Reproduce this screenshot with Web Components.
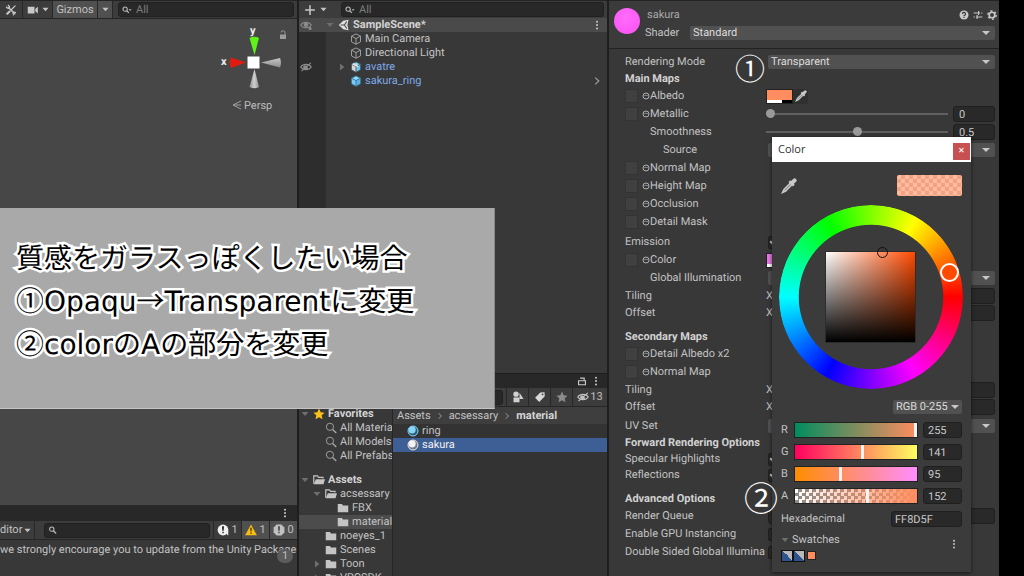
<!DOCTYPE html>
<html lang="ja">
<head>
<meta charset="utf-8">
<title>Unity Editor – sakura material</title>
<style>
  html, body { margin: 0; height: 100%; background: #000; overflow: hidden; }
  body { font: 11px/14px Roboto, "Noto Sans CJK JP", sans-serif; color: #c2c2c2; text-rendering: geometricPrecision; }
</style>
</head>
<body>
<editor-app></editor-app>

<script>
const BASE = `
  *, *::before, *::after { box-sizing: border-box; }
  button, input, select { font: inherit; color: inherit; text-rendering: inherit; margin: 0; border: 0; padding: 0; background: none; min-width: 0; border-radius: 0; outline: 0; }
  button { display: flex; align-items: center; justify-content: center; }
  .field { height: 16px; background: #292929; border: 1px solid #1f1f1f; border-radius: 3px; padding: 0 5px; color: #c8c8c8; }
  .drop { position: relative; display: flex; }
  .drop select { appearance: none; width: 100%; height: 14px; line-height: 14px; background: #515151; border-radius: 2px; padding: 0 16px 0 3px; color: #dcdcdc; }
  .drop::after { content: ""; position: absolute; right: 5px; top: 5px; border: 4px solid transparent; border-top-color: #c8c8c8; border-bottom: 0; pointer-events: none; }
`;
function define(name, css, html) {
  customElements.define(name, class extends HTMLElement {
    connectedCallback() {
      if (this.shadowRoot) return;
      const root = this.attachShadow({ mode: "open" });
      root.innerHTML = `<style>${BASE}${css}</style>${typeof html === "function" ? html(this) : html}`;
    }
  });
}

const CUBE = (top, left, right, line) => `<path d="M8 1.2 14 4.2 8 7.4 2 4.2z" fill="${top}"/><path d="M2 4.2 8 7.4V15L2 11.8z" fill="${left}"/><path d="M14 4.2 8 7.4V15l6-3.2z" fill="${right}"/><path d="M8 1.2 14 4.2V11.8L8 15 2 11.8V4.2zM2 4.2 8 7.4l6-3.2M8 7.4V15" fill="none" stroke="${line}" stroke-width="1.2" stroke-linejoin="round"/>`;
const ICONS = {
  tools: `<g stroke="#c8c8c8" fill="none" stroke-linecap="round"><path d="M5 5 13 13" stroke-width="2"/><path d="M13.5 2.5 8 8" stroke-width="1.6"/><path d="M6 10 3 13" stroke-width="2.8"/><path d="M2 4.2A2.6 2.6 0 0 0 5.6 5.4 2.6 2.6 0 0 0 4.4 1.8" stroke-width="1.8"/><path d="M14 11.4a2.4 2.4 0 0 0-3 .4 2.4 2.4 0 0 0 .4 2.6" stroke-width="1.6"/></g>`,
  camera: `<path d="M1 3.5h9v9H1zM11 6.6l3.5-3v9l-3.5-3z" fill="#c8c8c8"/>`,
  caret: `<path d="M1 4h14l-7 8z" fill="currentColor"/>`,
  right: `<path d="M4 1v14l9-7z" fill="currentColor"/>`,
  search: `<circle cx="6" cy="6.6" r="3.4" fill="none" stroke="#b4b4b4" stroke-width="1.8"/><path d="M8.6 9.2 13 13.6" stroke="#b4b4b4" stroke-width="2.2"/>`,
  searchmenu: `<circle cx="5" cy="6.6" r="3.4" fill="none" stroke="#b4b4b4" stroke-width="1.8"/><path d="M7.6 9.2 11 12.6" stroke="#b4b4b4" stroke-width="2"/><path d="M10.5 6.6h5L13 9.4z" fill="#b4b4b4"/>`,
  magnify: `<circle cx="6.6" cy="6.4" r="4.8" fill="none" stroke="#a8a8a8" stroke-width="1.2"/><path d="M10.2 10 15 14.6" stroke="#a8a8a8" stroke-width="1.8"/>`,
  plus: `<path d="M8 1.5v13M1.5 8h13" stroke="#c8c8c8" stroke-width="2"/>`,
  eye: `<path d="M1 8C4 3 12 3 15 8 12 13 4 13 1 8z" fill="none" stroke="#8c8c8c" stroke-width="1.4"/><circle cx="8" cy="7.5" r="3" fill="#8c8c8c"/><circle cx="13.4" cy="12.6" r="2" fill="#8c8c8c"/>`,
  eyeoff: `<path d="M1 8C4 3.4 12 3.4 15 8 12 12.6 4 12.6 1 8z" fill="none" stroke="currentColor" stroke-width="1.5"/><path d="M5.5 6.5a3 3 0 0 0 4.4 4l-1-3.5zM2 13.5 14.5 2.5" stroke="currentColor" stroke-width="1.6" fill="currentColor"/>`,
  unity: `<path d="M1 8 7 2.2 14 1l-1.4 7L14 15 7 13.8z" fill="#e0e0e0"/><path d="M8.5 8H3.6M8.5 8l3.2-4.6M8.5 8l3.2 4.6" fill="none" stroke="#484848" stroke-width="1.5"/>`,
  cube: CUBE("none", "none", "none", "#a8a8a8"),
  prefab: CUBE("#8fdcff", "#78ccf6", "#5eb4e4", "#3d7896"),
  variant: CUBE("#8fdcff", "#d8d8d8", "#6cc6f2", "#4a5c66") + `<path d="M5 2.8 10.6 6v2.2L8 7.4 2.6 4.4z" fill="#e4e4e4"/>`,
  dots: `<circle cx="8" cy="2.6" r="1.6" fill="#c8c8c8"/><circle cx="8" cy="8" r="1.6" fill="#c8c8c8"/><circle cx="8" cy="13.4" r="1.6" fill="#c8c8c8"/>`,
  chevron: `<path d="M5 2.5 11 8l-6 5.5" fill="none" stroke="#a0a0a0" stroke-width="1.8"/>`,
  lockline: `<path d="M2.5 7.5h11v6.4h-11zM11.5 7.5V3.4h-6.5" fill="none" stroke="#c8c8c8" stroke-width="1.8"/>`,
  star: `<path d="M8 .8 10.2 5.6 15.4 6.2 11.6 9.8 12.6 15 8 12.4 3.4 15 4.4 9.8.6 6.2 5.8 5.6z" fill="currentColor"/>`,
  folder: `<path d="M1 2.5h5.6L8 4.5h7v9.3H1z" fill="#c4c4c4"/>`,
  folderopen: `<path d="M1 13V2.5h5L7.4 4.4h6V6" fill="none" stroke="#c4c4c4" stroke-width="1.6"/><path d="M3.8 7H16l-2 6.8H1z" fill="#c4c4c4"/>`,
  shapes: `<circle cx="5.4" cy="4.2" r="3.6" fill="#d0d0d0"/><path d="M10 2.4l5.4 8.2h-5.4z" fill="#d0d0d0"/><path d="M2 8.6h8V15H2z" fill="#d0d0d0"/>`,
  tag: `<path d="M8.4 2 14 1.6 14.4 7 7 14.6 1.4 9z" fill="#d8d8d8"/><circle cx="11.4" cy="4.6" r="1.2" fill="#3c3c3c"/>`,
  ballblue: `<circle cx="8" cy="8" r="7.4" fill="#2b5b70"/><circle cx="8" cy="8" r="6.6" fill="none" stroke="#8fdcf8" stroke-width="1.2"/><circle cx="6.8" cy="6.4" r="4.8" fill="#86d4f6"/>`,
  ballwhite: `<circle cx="8" cy="8" r="7.4" fill="#707a8c"/><circle cx="8" cy="8" r="6.6" fill="none" stroke="#e6e6e6" stroke-width="1.2"/><circle cx="6.8" cy="6.4" r="4.8" fill="#f2f2f2"/>`,
  info: `<circle cx="8" cy="8" r="7.2" fill="#f0f0f0"/><path d="M11 12l4 3.4V9z" fill="#f0f0f0"/><path d="M6.6 3h2.8L9 9H7zM7 10.4h2v2H7z" fill="#303030"/>`,
  warn: `<path d="M8 .8 15.8 15H.2z" fill="#f7bd10"/><path d="M7 5h2l-.3 5H7.3zM7.1 11.3h1.8V13H7.1z" fill="#402f00"/>`,
  error: `<path d="M4.8.8h6.4l4 4v6.4l-4 4H4.8l-4-4V4.8z" fill="#c0c0c0"/><path d="M6.8 3h2.4L9 9H7zM7 10.4h2v2H7z" fill="#484848"/>`,
  help: `<circle cx="8" cy="8" r="7.2" fill="#c8c8c8"/><path d="M5.6 6.4A2.4 2.4 0 1 1 8.8 8.5L8 9.2V10M8 11.2v1.6" fill="none" stroke="#303030" stroke-width="1.8"/>`,
  preset: `<path d="M1 4.8h10M9 1.5v6.5M13 4.8h2M5 11.2h10M6.5 8v6.5M1 11.2h2" stroke="#c8c8c8" stroke-width="1.8"/>`,
  gear: `<circle cx="8" cy="8" r="4.4" fill="none" stroke="#c8c8c8" stroke-width="2.6"/><circle cx="8" cy="8" r="6.6" fill="none" stroke="#c8c8c8" stroke-width="2.4" stroke-dasharray="3.4 3.51"/>`,
  dropper: `<path d="M8.4 3.2 12.8 7.6" stroke="#c8c8c8" stroke-width="2.6"/><path d="M10.8 5.2 13.6 2.4" stroke="#c8c8c8" stroke-width="4" stroke-linecap="round"/><path d="M9.2 5.2 3 11.4 1.6 14.4 4.6 13 10.8 6.8z" fill="#777" stroke="#c8c8c8" stroke-width="1.6"/>`,
  target: `<circle cx="8" cy="8" r="6" fill="none" stroke="#bcbcbc" stroke-width="1.8"/><path d="M4 6.8h8" stroke="#8c8c8c" stroke-width="1.8"/>`
};
ICONS["star-y"] = ICONS.star.replace("currentColor", "#fbc117");
define("ui-icon", `:host { display: inline-flex; flex: none; width: 12px; height: 12px; } svg { width: 100%; height: 100%; display: block; }`,
  el => `<svg viewBox="0 0 16 16" aria-hidden="true">${ICONS[el.getAttribute("name")]}</svg>`);

define("search-box", `
  :host { display: block; flex: 1; min-width: 0; }
  label { display: flex; align-items: center; gap: 4px; height: 15px; padding: 0 3px; background: #282828; border: 1px solid #202020; border-radius: 3px; }
  input { flex: 1; height: 13px; } input::placeholder { color: #7c7c7c; opacity: 1; }
  ui-icon { width: 10px; height: 10px; }`,
  el => `<label><ui-icon name="${el.getAttribute("icon")}"></ui-icon><input type="text" aria-label="Search" placeholder="${el.getAttribute("hint") || ""}"></label>`);

/* Left column: scene view over the console */
define("scene-view", `
  :host { display: flex; flex-direction: column; flex: 1; min-height: 0; background: #474747; }
  .bar { display: flex; height: 19px; background: #3c3c3c; border-bottom: 1px solid #242424; border-top: 1px solid #242424; padding-right: 3px; align-items: center; }
  .bar button { height: 17px; border-right: 1px solid #282828; gap: 3px; flex: none; }
  .t { width: 23px; } .c { width: 30px; } .g { width: 45px; background: #505050; } .a { width: 15px; background: #505050; }
  .bar button ui-icon:last-child { width: 7px; height: 7px; } .bar .t ui-icon:last-child, .bar .c ui-icon:first-child { width: 12px; height: 12px; }
  search-box { margin-left: 5px; }
  .view { display: flex; justify-content: flex-end; align-items: flex-start; padding: 6px 7px; }
  svg { width: 72px; height: 90px; } text { font: 700 11px Roboto, sans-serif; fill: #eee; } .p { font-weight: 400; fill: #bcbcbc; }`,
  `<div class="bar">
    <button class="t" aria-label="Tools"><ui-icon name="tools"></ui-icon></button>
    <button class="c" aria-label="Camera"><ui-icon name="camera"></ui-icon><ui-icon name="caret"></ui-icon></button>
    <button class="g">Gizmos</button><button class="a" aria-label="Gizmo options"><ui-icon name="caret"></ui-icon></button>
    <search-box icon="searchmenu" hint="All"></search-box>
  </div>
  <div class="view"><svg viewBox="0 0 72 90">
    <defs><linearGradient id="s"><stop stop-color="#8c8c8c"/><stop offset=".5" stop-color="#d0d0d0"/><stop offset="1" stop-color="#929292"/></linearGradient>
    <linearGradient id="v" x2="0" y2="1"><stop stop-color="#c8c8c8"/><stop offset="1" stop-color="#8c8c8c"/></linearGradient></defs>
    <path d="M31.5 13q5-2.5 9.5 0L36.5 30z" fill="#5df31a"/><path d="M13 32.5q-2.5 5 0 10.5L28 37.5z" fill="#e01b10"/>
    <path d="M62 33q2 5 0 9.5L43 37.5z" fill="url(#v)"/><path d="M36.5 44 41 62q-4.5 2.5-9.5 0z" fill="url(#s)"/>
    <path d="M29.5 31.5h12v12h-12z" fill="#fff"/>
    <text x="32" y="9">y</text><text x="3" y="40">x</text>
    <path d="M62 9.5h6v4.5h-6z" fill="#9c9c9c"/><path d="M67 9.5V8a2 2 0 0 0-4-.5" fill="none" stroke="#9c9c9c"/>
    <path d="M23 76 15 80l8 4M15 80h8" fill="none" stroke="#a0a0a0"/><text class="p" x="26" y="84">Persp</text>
  </svg></div>`);

define("console-panel", `
  :host { display: block; height: 71px; background: #383838; position: relative; overflow: hidden; }
  .tab { height: 16px; background: #282828; display: flex; justify-content: flex-end; align-items: center; padding-right: 7px; }
  .tab ui-icon { width: 10px; height: 10px; }
  .bar { display: flex; align-items: center; height: 19px; background: #3c3c3c; border-bottom: 1px solid #262626; }
  .bar button { height: 18px; gap: 2px; border-left: 1px solid #282828; flex: none; width: 28px; }
  .bar .ed { border: 0; border-right: 1px solid #282828; width: 35px; justify-content: flex-start; }
  .ed ui-icon { width: 7px; height: 7px; }
  .on { background: #505050; }
  search-box { margin: 0 3px 0 9px; } p { margin: 3px 0 0; white-space: nowrap; }
  .n { position: absolute; right: 4px; top: 44px; width: 16px; height: 14px; border-radius: 7px; background: #5c5c5c; text-align: center; }`,
  `<div class="tab"><ui-icon name="dots"></ui-icon></div>
   <div class="bar"><button class="ed">ditor<ui-icon name="caret"></ui-icon></button><search-box icon="search"></search-box>
   <button><ui-icon name="info"></ui-icon>1</button><button class="on"><ui-icon name="warn"></ui-icon>1</button><button class="on"><ui-icon name="error"></ui-icon>0</button></div>
   <p>we strongly encourage you to update from the Unity Package</p><span class="n">1</span>`);

/* One line of a tree; --in is its indentation */
define("tree-row", `
  :host { display: flex; align-items: center; height: 14px; white-space: nowrap; padding-left: var(--in, 0px); overflow: hidden; }
  :host([bold]) { font-weight: 700; color: #d4d4d4; }
  .f { width: 8px; height: 8px; margin-right: 4px; color: #6e6e6e; } .i { margin-right: 3px; }
  span { flex: 1; }`,
  el => { const f = el.getAttribute("fold"); return `<ui-icon class="f" name="${f || "right"}" ${f ? "" : 'style="visibility:hidden"'}></ui-icon><ui-icon class="i" name="${el.getAttribute("icon")}"></ui-icon><span><slot></slot></span><slot name="end"></slot>`; });

define("hierarchy-panel", `
  :host { display: flex; flex-direction: column; flex: 1; min-height: 0; background: #383838; }
  .bar { display: flex; align-items: center; height: 18px; padding: 0 3px 0 5px; background: #3c3c3c; border-top: 1px solid #242424; }
  .bar button { gap: 4px; width: 37px; justify-content: flex-start; } .bar button ui-icon + ui-icon { width: 7px; height: 7px; }
  .tree { flex: 1; display: grid; grid-template-columns: 27px 1fr; align-content: start; background: linear-gradient(to right, #2d2d2d 27px, transparent 27px); }
  .g { height: 14px; padding-left: 1px; display: flex; align-items: center; color: #8c8c8c; } .s { background: #4a4a4a; }
  .blue { color: #7da8e6; } tree-row ui-icon { width: 10px; height: 10px; margin-right: 5px; }`,
  `<div class="bar"><button aria-label="Create"><ui-icon name="plus"></ui-icon><ui-icon name="caret"></ui-icon></button><search-box icon="searchmenu" hint="All"></search-box></div>
  <div class="tree">
    <div class="g s"><ui-icon name="eye"></ui-icon></div><tree-row class="s" bold fold="caret" icon="unity">SampleScene*<ui-icon slot="end" name="dots"></ui-icon></tree-row>
    <div class="g"></div><tree-row icon="cube" style="--in:12px">Main Camera</tree-row>
    <div class="g"></div><tree-row icon="cube" style="--in:12px">Directional Light</tree-row>
    <div class="g"><ui-icon name="eyeoff"></ui-icon></div><tree-row class="blue" fold="right" icon="variant" style="--in:12px">avatre</tree-row>
    <div class="g"></div><tree-row class="blue" icon="prefab" style="--in:12px">sakura_ring<ui-icon slot="end" name="chevron"></ui-icon></tree-row>
  </div>`);

define("project-panel", `
  :host { display: flex; flex-direction: column; height: 203px; background: #333; overflow: hidden; }
  .tab { flex: none; height: 15px; background: #282828; border-top: 1px solid #1e1e1e; display: flex; justify-content: flex-end; align-items: center; gap: 4px; padding-right: 6px; }
  .tab ui-icon { width: 10px; height: 10px; }
  .bar { flex: none; display: flex; height: 19px; background: #3c3c3c; align-items: center; border-bottom: 1px solid #262626; }
  .bar button { width: 22px; height: 18px; border-left: 1px solid #282828; color: #8c8c8c; gap: 1px; flex: none; }
  .bar .h { width: 35px; color: #c0c0c0; } .bar search-box { margin: 0 3px; }
  .cols { flex: 1; min-height: 0; display: grid; grid-template-columns: 94px minmax(0, 1fr); }
  .side { background: #383838; border-right: 1px solid #262626; overflow: hidden; }
  .side .gap { height: 10px; } .sel { background: #4c4c4c; }
  nav { height: 17px; background: #3e3e3e; display: flex; align-items: center; gap: 5px; padding-left: 4px; white-space: nowrap; }
  nav a { color: inherit; text-decoration: none; } nav ui-icon { width: 8px; height: 8px; } nav b { font-weight: 700; color: #d4d4d4; }
  .list tree-row.on { background: #3e5f96; color: #f0f0f0; }`,
  `<div class="tab"><ui-icon name="lockline"></ui-icon><ui-icon name="dots"></ui-icon></div>
  <div class="bar"><search-box icon="search"></search-box><button aria-label="Filter by type"><ui-icon name="shapes"></ui-icon></button><button aria-label="Filter by label"><ui-icon name="tag"></ui-icon></button><button aria-label="Favorite"><ui-icon name="star"></ui-icon></button><button class="h"><ui-icon name="eyeoff"></ui-icon>13</button></div>
  <div class="cols"><div class="side">
    <tree-row bold fold="caret" icon="star-y" style="--in:2px">Favorites</tree-row>
    <tree-row icon="magnify" style="--in:14px">All Materia</tree-row>
    <tree-row icon="magnify" style="--in:14px">All Models</tree-row>
    <tree-row icon="magnify" style="--in:14px">All Prefabs</tree-row>
    <div class="gap"></div>
    <tree-row bold fold="caret" icon="folderopen" style="--in:2px">Assets</tree-row>
    <tree-row fold="caret" icon="folderopen" style="--in:14px">acsessary</tree-row>
    <tree-row icon="folder" style="--in:26px">FBX</tree-row>
    <tree-row class="sel" icon="folder" style="--in:26px">material</tree-row>
    <tree-row icon="folder" style="--in:14px">noeyes_1</tree-row>
    <tree-row icon="folder" style="--in:14px">Scenes</tree-row>
    <tree-row fold="right" icon="folder" style="--in:14px">Toon</tree-row>
    <tree-row fold="right" icon="folder" style="--in:14px">VRCSDK</tree-row>
  </div><div>
    <nav><a href="#assets">Assets</a><ui-icon name="chevron"></ui-icon><a href="#acsessary">acsessary</a><ui-icon name="chevron"></ui-icon><b>material</b></nav>
    <div class="list"><tree-row icon="ballblue" style="--in:2px">ring</tree-row><tree-row class="on" icon="ballwhite" style="--in:2px">sakura</tree-row></div>
  </div></div>`);

/* A labelled material property; `type` picks the control */
const CONTROLS = {
  select: v => `<div class="drop"><select id="c"><option>${v}</option></select></div>`,
  slider: v => `<div class="line"><input id="c" type="range" min="0" max="1" step="0.01" value="${v}"><input class="field num" type="text" aria-label="Value" value="${v}"></div>`,
  field: v => `<input id="c" class="field" type="text" value="${v}">`,
  vector: v => `<div class="line v"><span>X</span><input id="c" class="field" value="${v}"></div>`,
  check: v => `<input id="c" type="checkbox" ${v ? "checked" : ""}>`,
  color: v => `<div class="col"><button id="c" class="sw" style="--c:${v}" aria-label="Color"></button><button class="dr" aria-label="Pick color"><ui-icon name="dropper"></ui-icon></button></div>`
};
define("prop-row", `
  :host { display: grid; grid-template-columns: 143px minmax(0, 1fr); align-items: center; height: 18px; }
  :host([type="vector"]) { height: 17px; }
  :host([head]), :host([short]) { height: 16px; } :host([head]) { font-weight: 700; color: #d2d2d2; }
  label, .lb { display: flex; align-items: center; white-space: nowrap; overflow: hidden; }
  :host([head]) .lb { overflow: visible; }
  :host([in="1"]) label { padding-left: 25px; } :host([in="2"]) label { padding-left: 38px; }
  .tex { width: 13px; height: 14px; background: #404040; border: 1px solid #333; margin-right: 4px; flex: none; }
  .tex + ui-icon { width: 8px; height: 8px; }
  .line { display: flex; gap: 5px; align-items: center; } .v { margin-left: -2px; } .v .field { flex: 1; }
  input[type=range] { appearance: none; flex: 1; height: 12px; margin-left: -2px; }
  input[type=range]::-webkit-slider-runnable-track { height: 2px; background: #606060; }
  input[type=range]::-webkit-slider-thumb { appearance: none; width: 9px; height: 9px; margin-top: -4px; border-radius: 50%; background: #9a9a9a; }
  .num { width: 42px; }
  input[type=checkbox] { appearance: none; width: 13px; height: 13px; background: #292929; border: 1px solid #1f1f1f; border-radius: 2px; display: grid; place-items: center; }
  input[type=checkbox]:checked::after { content: ""; width: 9px; height: 5px; border: solid #d0d0d0; border-width: 0 0 2px 2px; transform: rotate(-45deg); margin-bottom: 3px; }
  .col { display: flex; margin-left: -2px; } .sw { width: 27px; height: 15px; border: 1px solid #222; background: linear-gradient(to right, #fff 60%, #000 60%) bottom / 100% 3px no-repeat, var(--c); }
  .dr { width: 15px; height: 15px; background: #303030; border-radius: 0 3px 3px 0; }`,
  el => {
    const t = el.getAttribute("type"), n = el.getAttribute("label");
    const tex = el.hasAttribute("tex") ? `<button class="tex" aria-label="${n} texture"></button><ui-icon name="target"></ui-icon>` : "";
    return t ? `<label for="c">${tex}${n}</label>${CONTROLS[t](el.getAttribute("value") || "")}` : `<div class="lb">${tex}${n}</div>`;
  });

define("inspector-panel", `
  :host { display: block; background: #383838; position: relative; border-left: 1px solid #1e1e1e; }
  header { display: grid; grid-template-columns: 27px 41px minmax(0, 1fr); column-gap: 4px; height: 49px; padding: 7px 4px 0 5px; border-top: 1px solid #242424; border-bottom: 1px solid #222; background: #3b3b3b; grid-template-rows: 14px 14px; row-gap: 4px; align-items: center; }
  .ball { grid-row: 1 / 3; width: 26px; height: 26px; align-self: start; border-radius: 50%; background: radial-gradient(circle at 45% 35%, #ff6cfb, #fb50f4); }
  .name { grid-column: 2; color: #a8a8a8; padding-left: 2px; } .acts { display: flex; justify-content: flex-end; gap: 4px; margin-right: -2px; } .acts ui-icon { width: 10px; height: 10px; }
  header label { grid-column: 2; }
  .props { padding: 4px 4px 0 16px; } section { padding-top: 2px; } section.g { padding-top: 8px; }`,
  `<header><div class="ball"></div><span class="name">sakura</span><div class="acts"><ui-icon name="help"></ui-icon><ui-icon name="preset"></ui-icon><ui-icon name="gear"></ui-icon></div>
    <label for="sh">Shader</label><div class="drop"><select id="sh"><option>Standard</option></select></div></header>
  <div class="props">
    <prop-row label="Rendering Mode" type="select" value="Transparent"></prop-row>
    <prop-row head label="Main Maps"></prop-row>
    <prop-row tex label="Albedo" type="color" value="#ff8d5f"></prop-row>
    <prop-row tex label="Metallic" type="slider" value="0"></prop-row>
    <prop-row in="1" label="Smoothness" type="slider" value="0.5"></prop-row>
    <prop-row in="2" label="Source" type="select"></prop-row>
    <prop-row tex label="Normal Map"></prop-row><prop-row tex label="Height Map"></prop-row><prop-row tex label="Occlusion"></prop-row><prop-row tex label="Detail Mask"></prop-row>
    <section><prop-row label="Emission" type="check" value="1"></prop-row><prop-row tex label="Color" type="color" value="#e878e4"></prop-row><prop-row in="1" label="Global Illumination" type="select"></prop-row>
    <prop-row label="Tiling" type="vector"></prop-row><prop-row label="Offset" type="vector"></prop-row></section>
    <section class="g"><prop-row head label="Secondary Maps"></prop-row><prop-row tex label="Detail Albedo x2"></prop-row><prop-row tex label="Normal Map"></prop-row>
    <prop-row label="Tiling" type="vector"></prop-row><prop-row label="Offset" type="vector"></prop-row></section>
    <section><prop-row label="UV Set" type="select"></prop-row><prop-row head label="Forward Rendering Options"></prop-row>
    <prop-row short label="Specular Highlights" type="check" value="1"></prop-row><prop-row short label="Reflections" type="check" value="1"></prop-row></section>
    <section class="g"><prop-row head label="Advanced Options"></prop-row><prop-row label="Render Queue" type="field"></prop-row>
    <prop-row label="Enable GPU Instancing" type="check"></prop-row><prop-row label="Double Sided Global Illumina" type="check"></prop-row></section>
  </div><slot></slot>`);

define("channel-row", `
  :host { display: grid; grid-template-columns: 8px minmax(0, 1fr) 39px; column-gap: 5px; align-items: center; height: 16px; }
  input[type=range] { appearance: none; height: 16px; width: 100%; border: 1px solid #222; background: var(--track); }
  input[type=range]::-webkit-slider-thumb { appearance: none; width: 3px; height: 14px; background: #f4f4f4; }
  .field { padding: 0 4px; }`,
  el => `<label for="r">${el.getAttribute("name")}</label><input id="r" type="range" min="0" max="255" value="${el.getAttribute("value")}"><input class="field" type="text" aria-label="${el.getAttribute("name")} value" value="${el.getAttribute("value")}">`);

define("color-picker", `
  :host { display: block; background: #3b3b3b; box-shadow: 0 1px 4px #0009; }
  .title { display: flex; justify-content: space-between; align-items: center; height: 25px; background: #fff; color: #333; padding-left: 6px; font: 11px/14px "Open Sans", sans-serif; }
  .title button { width: 17px; height: 17px; background: #c75050; color: #fff; font-weight: 600; line-height: 12px; margin: 3px 1px 0 0; }
  .body { padding: 13px 9px 10px; }
  .top { display: flex; justify-content: space-between; height: 21px; align-items: center; } .top ui-icon { width: 16px; height: 16px; }
  .prev { width: 65px; height: 21px; border-radius: 2px; background: repeating-conic-gradient(#efa286 0 25%, #ffbb9e 0 50%) 0 0 / 8px 8px; }
  .wheel { position: relative; width: 184px; height: 184px; margin: 9px 0 0 -2px; }
  .hue { position: absolute; inset: 0; border-radius: 50%; background: conic-gradient(from 90deg, red, #f0f, blue, cyan, lime, yellow, red); -webkit-mask: radial-gradient(closest-side, transparent 78%, #000 79%); mask: radial-gradient(closest-side, transparent 78%, #000 79%); }
  .sv { position: absolute; left: 46px; top: 46px; width: 91px; height: 92px; border: 1px solid #2c2c2c; background: linear-gradient(to top, #000, transparent), linear-gradient(to right, #fff, #ff4a00); }
  .k { position: absolute; border-radius: 50%; } .kh { width: 19px; height: 19px; left: 161px; top: 58px; border: 2px solid #fff; background: #ff4a00; } .ks { width: 11px; height: 11px; left: 98px; top: 42px; border: 1px solid #111; }
  .mode { width: 69px; margin: 11px 0 8px auto; } .mode::after { right: 3px; } .mode select { padding-right: 0; white-space: nowrap; }
  .ch { display: grid; gap: 6px; }
  .hex { display: flex; justify-content: space-between; align-items: center; margin-top: 7px; } .hex input { width: 71px; padding: 0 3px; }
  .sws { display: flex; align-items: center; gap: 3px; height: 14px; margin-top: 6px; color: #6e6e6e; } .sws span { flex: 1; color: #c2c2c2; } .sws ui-icon { width: 8px; height: 8px; } .sws .d { width: 10px; height: 10px; margin: 8px 3px 0 0; }
  .chips { display: flex; margin-top: 3px; } .chips button { width: 12px; height: 12px; border: 1px solid #111; background: linear-gradient(45deg, #2f538c 55%, #b8b8b8 55%); } .chips .o { width: 9px; height: 9px; margin: 1px 2px; background: #ff8d5f; border-color: #222; }`,
  `<div class="title"><span>Color</span><button aria-label="Close">×</button></div>
  <div class="body">
    <div class="top"><ui-icon name="dropper"></ui-icon><div class="prev"></div></div>
    <div class="wheel"><div class="hue"></div><div class="sv"></div><div class="k kh"></div><div class="k ks"></div></div>
    <div class="drop mode"><select aria-label="Color mode"><option>RGB 0-255</option></select></div>
    <div class="ch">
      <channel-row name="R" value="255" style="--track:linear-gradient(to right,#008d5f,#ff8d5f)"></channel-row>
      <channel-row name="G" value="141" style="--track:linear-gradient(to right,#ff005f,#ffff5f)"></channel-row>
      <channel-row name="B" value="95" style="--track:linear-gradient(to right,#ff8d00,#ff8dff)"></channel-row>
      <channel-row name="A" value="152" style="--track:linear-gradient(to right,#ff8d5f00,#ff8d5f),repeating-conic-gradient(#8c8c8c 0 25%,#fff 0 50%) 0 0/7px 7px"></channel-row>
    </div>
    <div class="hex"><label for="hx">Hexadecimal</label><input id="hx" class="field" type="text" value="FF8D5F"></div>
    <div class="sws"><ui-icon name="caret"></ui-icon><span>Swatches</span><ui-icon class="d" name="dots"></ui-icon></div>
    <div class="chips"><button aria-label="Swatch 1"></button><button aria-label="Swatch 2"></button><button class="o" aria-label="Swatch 3"></button></div>
  </div>`);

define("step-mark", `:host { display: block; color: #fff; font-family: "Noto Sans CJK JP", sans-serif; font-size: 30px; line-height: 32px; }`, `<slot></slot>`);

define("caption-note", `
  :host { display: block; background: #a9a9a9; color: #000; padding: 28px 16px 0; font: 400 28px/43px "Noto Sans CJK JP", sans-serif; border-bottom: 1px solid #c4c4c4; border-right: 1px solid #888; }
  p { margin: 0; height: 43px; white-space: nowrap; -webkit-text-stroke: 5px #fff; paint-order: stroke fill; }
  span { font-family: "DejaVu Sans", sans-serif; font-weight: 400; }`,
  `<p>質感をガラスっぽくしたい場合</p><p>①<span>Opaqu</span>→<span>Transparent</span>に変更</p><p>②<span>color</span>の<span>A</span>の部分を変更</p>`);

define("editor-app", `
  :host { position: relative; display: grid; grid-template-columns: minmax(0, 297fr) minmax(0, 311fr) minmax(0, 391fr) minmax(0, 25fr); height: 100vh; background: #000; overflow: hidden; }
  .col { display: flex; flex-direction: column; min-width: 0; min-height: 0; } .mid { border-left: 2px solid #1e1e1e; border-right: 1px solid #1e1e1e; } .left { background: #282828; }
  color-picker { position: absolute; right: 28px; top: 137px; width: 199px; }
  .one { position: absolute; left: 126px; top: 51px; } .two { position: absolute; left: 135px; top: 481px; font-size: 34px; }
  caption-note { position: absolute; left: 0; top: 208px; width: 495px; height: 201px; box-sizing: border-box; }`,
  `<div class="col left"><scene-view></scene-view><console-panel></console-panel></div>
  <div class="col mid"><hierarchy-panel></hierarchy-panel><project-panel></project-panel></div>
  <inspector-panel><color-picker></color-picker><step-mark class="one">①</step-mark><step-mark class="two">②</step-mark></inspector-panel>
  <caption-note></caption-note>`);
</script>
</body>
</html>
